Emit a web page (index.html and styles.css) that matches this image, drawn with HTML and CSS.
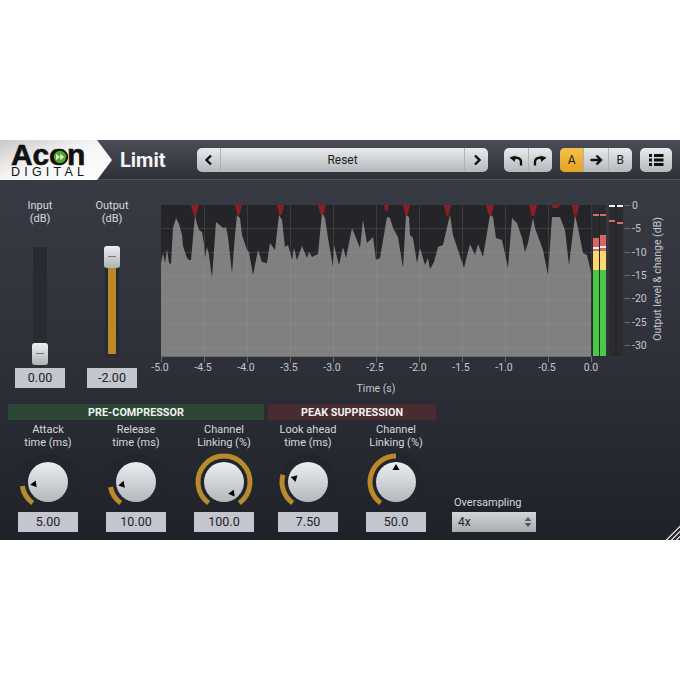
FILE: index.html
```html
<!DOCTYPE html>
<html lang="en">
<head>
    <meta charset="UTF-8">
    <title>Acon Digital Limit</title>
    <link rel="stylesheet" href="styles.css">
</head>
<body>
    <div class="plugin">
        <div class="header">
            <div class="logo">
                <div class="logo-name">Acon</div>
                <div class="logo-sub">DIGITAL</div>
                <svg class="logo-dot" viewBox="0 0 18 18" width="18" height="18">
                    <circle cx="9" cy="9" r="7.200" fill="#4ea52c" stroke="#111" stroke-width="2"/>
                    <path d="M5 5.800 9 9 5 12.200ZM9.200 5.800 13.200 9 9.200 12.200Z" fill="#dcebd0"/>
                </svg>
            </div>
            <div class="title">Limit</div>
            <div class="btn-group preset">
                <div class="btn btn-side"><svg class="icon" viewBox="0 0 16 16"><path class="line" d="M10 3.500 5.500 8l4.500 4.500"/></svg></div>
                <div class="btn preset-name">Reset</div>
                <div class="btn btn-side"><svg class="icon" viewBox="0 0 16 16"><path class="line" d="M6 3.500 10.500 8 6 12.500"/></svg></div>
            </div>
            <div class="btn-group history">
                <div class="btn"><svg class="icon" viewBox="0 0 16 16"><path class="line" d="M13 13.500V10C13 6 9 4.500 5 7"/><path d="M1.500 5.500 7.500 3.500 6.800 10Z"/></svg></div>
                <div class="btn"><svg class="icon" viewBox="0 0 16 16"><path class="line" d="M3 13.500V10C3 6 7 4.500 11 7"/><path d="M14.500 5.500 8.500 3.500 9.200 10Z"/></svg></div>
            </div>
            <div class="btn-group compare">
                <div class="btn btn-on">A</div>
                <div class="btn"><svg class="icon" viewBox="0 0 16 16"><path class="line" d="M2.500 8H13M8.500 3.500 13 8l-4.500 4.500"/></svg></div>
                <div class="btn">B</div>
            </div>
            <div class="btn-group menu">
                <div class="btn"><svg class="icon icon-wide" viewBox="0 0 16 14"><path d="M1 1h3v3H1zM6 1h9.500v3H6zM1 5.500h3v3H1zM6 5.500h9.500v3H6zM1 10h3v3H1zM6 10h9.500v3H6z"/></svg></div>
            </div>
        </div>

        <div class="main">
            <div class="fader-col">
                <div class="label">Input<br>(dB)</div>
                <div class="fader">
                    <div class="track"></div>
                    <div class="handle handle-low"></div>
                </div>
                <div class="value">0.00</div>
            </div>
            <div class="fader-col">
                <div class="label">Output<br>(dB)</div>
                <div class="fader">
                    <div class="track"><div class="track-fill"></div></div>
                    <div class="handle handle-high"></div>
                </div>
                <div class="value">-2.00</div>
            </div>

            <svg class="graph" viewBox="150 195 530 205" width="530" height="205">
                <rect class="plot-bg" x="161" y="205" width="430" height="151"/>
                <path class="wave" d="M161 356V263L163 253 165 263 167 249 169 263 171 264 173 228 176 218 179 224 182 235 183 246 187 258 189 260 191 260 195 215 197 224 199 230 202 232 204 244 205 258 207 247 209 255 212 278 216 222 222 227 224 228 226 227 228 237 232 273 235 235 237 215 240 218 242 235 247 250 249 252 253 275 258 250 262 262 267 263 270 243 275 250 279 215 282 220 285 247 288 245 292 260 294 248 297 260 302 246 307 258 309 252 312 257 318 254 322 213 325 218 328 238 333 267 334 245 339 265 343 247 346 258 352 228 360 248 363 220 367 243 373 237 376 260 380 258 387 217 390 218 393 228 398 237 403 268 406 215 409 217 410 235 413 238 417 263 420 248 425 265 428 258 430 269 434 262 438 247 443 245 448 223 450 215 453 235 458 250 464 268 470 244 475 255 478 244 483 257 490 215 493 217 496 238 502 240 508 268 512 218 517 223 522 238 525 252 528 243 533 218 535 228 543 250 548 275 552 217 560 217 565 230 569 265 575 215 578 228 583 253 587 255 591 272V356Z"/>
                <path class="peak" d="M191 205h8l-3 11h-2zM235 205h7l-2.500 10h-2zM277 205h7l-2.500 10h-2zM318 205h8l-2.500 9h-3zM384 205h5l-1.500 6h-2zM403 205h7l-2.500 10h-2zM444 205h7l-2.500 11h-2zM486 205h8l-2.500 10h-3zM529 205h8l-2.500 11h-3zM551 205h9l-2 3h-5zM572 205h7l-2 10h-3z"/>
                <path class="grid" d="M161 228H591M161 252H591M161 275H591M161 299H591M161 323H591M161 347H591M204 205V356M247 205V356M290 205V356M333 205V356M376 205V356M419 205V356M462 205V356M505 205V356M548 205V356"/>
                <path class="axis" d="M161 356H591M161 356V362M204 356V362M247 356V362M290 356V362M333 356V362M376 356V362M419 356V362M462 356V362M505 356V362M548 356V362M591 356V362"/>
                <g class="ticks-x">
                    <text x="160" y="371">-5.0</text>
                    <text x="203" y="371">-4.5</text>
                    <text x="246" y="371">-4.0</text>
                    <text x="289" y="371">-3.5</text>
                    <text x="332" y="371">-3.0</text>
                    <text x="375" y="371">-2.5</text>
                    <text x="418" y="371">-2.0</text>
                    <text x="461" y="371">-1.5</text>
                    <text x="504" y="371">-1.0</text>
                    <text x="547" y="371">-0.5</text>
                    <text x="591" y="371">0.0</text>
                    <text x="376" y="392">Time (s)</text>
                </g>

                <rect class="meter-bg" x="592" y="205" width="14" height="151"/>
                <rect class="meter-bg" x="609" y="205" width="14" height="151"/>
                <rect class="meter-green" x="593" y="270" width="13" height="86"/>
                <rect class="meter-yellow" x="593" y="251" width="13" height="19"/>
                <rect class="meter-red" x="593" y="238" width="6" height="13"/>
                <rect class="meter-red" x="600" y="235" width="6" height="16"/>
                <rect class="meter-white" x="593" y="247" width="6" height="2"/>
                <rect class="meter-white" x="600" y="246" width="6" height="2"/>
                <rect class="meter-pink" x="593" y="214" width="6" height="2"/>
                <rect class="meter-pink" x="600" y="214" width="6" height="2"/>
                <rect class="meter-gap" x="599" y="205" width="1" height="151"/>
                <rect class="meter-gap" x="615.500" y="205" width="1" height="151"/>
                <rect class="meter-white" x="609" y="205" width="6" height="2"/>
                <rect class="meter-white" x="617" y="205" width="6" height="2"/>
                <rect class="meter-pink" x="609" y="220" width="6" height="2"/>
                <rect class="meter-pink" x="617" y="222" width="6" height="2"/>

                <path class="axis" d="M624 205H630M624 228H630M624 252H630M624 275H630M624 298H630M624 322H630M624 345H630"/>
                <g class="ticks-y">
                    <text x="632" y="209">0</text>
                    <text x="632" y="232">-5</text>
                    <text x="632" y="256">-10</text>
                    <text x="632" y="279">-15</text>
                    <text x="632" y="302">-20</text>
                    <text x="632" y="326">-25</text>
                    <text x="632" y="349">-30</text>
                </g>
                <text class="side-label" transform="rotate(-90 661 279)" x="661" y="279">Output level &amp; change (dB)</text>
            </svg>
        </div>

        <div class="bottom">
            <div class="group">
                <div class="group-title title-green">PRE-COMPRESSOR</div>
                <div class="knobs">
                    <div class="knob-col">
                        <div class="label">Attack<br>time (ms)</div>
                        <svg class="knob" viewBox="2 2 60 60" width="60" height="60">
                            <defs>
                                <linearGradient id="knobFace" x1="0" y1="0" x2="0" y2="1">
                                    <stop offset="0" stop-color="#eceef1"/>
                                    <stop offset="1" stop-color="#b4b7bc"/>
                                </linearGradient>
                            </defs>
                            <circle class="knob-back" cx="32" cy="32" r="28.500"/>
                            <path class="knob-arc" d="M16.700 53A26 26 0 0 1 6.300 36.100"/>
                            <circle cx="32" cy="32" r="20" fill="url(#knobFace)"/>
                            <path d="M32 14l-3.500 6h7z" transform="rotate(-99 32 32)"/>
                        </svg>
                        <div class="value">5.00</div>
                    </div>
                    <div class="knob-col">
                        <div class="label">Release<br>time (ms)</div>
                        <svg class="knob" viewBox="2 2 60 60" width="60" height="60">
                            <circle class="knob-back" cx="32" cy="32" r="28.500"/>
                            <path class="knob-arc" d="M16.700 53A26 26 0 0 1 6.500 37"/>
                            <circle cx="32" cy="32" r="20" fill="url(#knobFace)"/>
                            <path d="M32 14l-3.500 6h7z" transform="rotate(-101 32 32)"/>
                        </svg>
                        <div class="value">10.00</div>
                    </div>
                    <div class="knob-col">
                        <div class="label">Channel<br>Linking (%)</div>
                        <svg class="knob" viewBox="2 2 60 60" width="60" height="60">
                            <circle class="knob-back" cx="32" cy="32" r="28.500"/>
                            <path class="knob-arc" d="M16.700 53A26 26 0 1 1 47.300 53"/>
                            <circle cx="32" cy="32" r="20" fill="url(#knobFace)"/>
                            <path d="M32 14l-3.500 6h7z" transform="rotate(144 32 32)"/>
                        </svg>
                        <div class="value">100.0</div>
                    </div>
                </div>
            </div>
            <div class="group">
                <div class="group-title title-red">PEAK SUPPRESSION</div>
                <div class="knobs">
                    <div class="knob-col">
                        <div class="label">Look ahead<br>time (ms)</div>
                        <svg class="knob" viewBox="2 2 60 60" width="60" height="60">
                            <circle class="knob-back" cx="32" cy="32" r="28.500"/>
                            <path class="knob-arc" d="M16.700 53A26 26 0 0 1 7 24.800"/>
                            <circle cx="32" cy="32" r="20" fill="url(#knobFace)"/>
                            <path d="M32 14l-3.500 6h7z" transform="rotate(-74 32 32)"/>
                        </svg>
                        <div class="value">7.50</div>
                    </div>
                    <div class="knob-col">
                        <div class="label">Channel<br>Linking (%)</div>
                        <svg class="knob" viewBox="2 2 60 60" width="60" height="60">
                            <circle class="knob-back" cx="32" cy="32" r="28.500"/>
                            <path class="knob-arc" d="M16.700 53A26 26 0 0 1 32 6"/>
                            <circle cx="32" cy="32" r="20" fill="url(#knobFace)"/>
                            <path d="M32 14l-3.500 6h7z"/>
                        </svg>
                        <div class="value">50.0</div>
                    </div>
                </div>
            </div>
            <div class="oversampling">
                <div class="over-label">Oversampling</div>
                <div class="select">
                    <span>4x</span>
                    <svg class="select-arrows" viewBox="0 0 8 12" width="8" height="12"><path d="M4 1 7.500 5H.5ZM4 11 .5 7h7Z"/></svg>
                </div>
            </div>
        </div>
        <div class="grip"></div>
    </div>
</body>
</html>
```

FILE: styles.css
```css
body { margin: 0; background: #fff; font-family: Roboto, "Liberation Sans", sans-serif; }
.plugin { position: relative; width: 680px; height: 400px; margin-top: 140px; overflow: hidden; background: linear-gradient(180deg, #3a3d46 0%, #30323b 50%, #1e2128 100%); color: #d6d8dc; }

.header { display: flex; align-items: center; height: 39px; border-bottom: 1px solid #4f5159; background: linear-gradient(180deg, #4b4d56 0%, #2f3139 100%); }
.logo { position: relative; flex: none; width: 112px; height: 40px; margin-bottom: -1px; color: #111; }
.logo::before { content: ""; position: absolute; inset: 0; background: linear-gradient(160deg, #c9c9c9 0%, #f4f4f4 45%, #ffffff 100%); clip-path: polygon(0 0, 97px 0, 112px 20px, 97px 40px, 0 40px); }
.logo-name { position: absolute; left: 11px; top: 3px; font: bold 30px/24px "Liberation Sans", sans-serif; letter-spacing: -0.2px; -webkit-text-stroke: 0.6px #111; }
.logo-sub { position: absolute; left: 11px; top: 27px; font: 12.500px/10px "Liberation Sans", sans-serif; letter-spacing: 4.200px; white-space: nowrap; }
.logo-dot { position: absolute; left: 51px; top: 8px; }
.title { flex: none; width: 85px; padding-left: 8px; box-sizing: border-box; font-size: 20px; font-weight: 700; color: #f4f5f6; }

.btn-group { flex: none; display: flex; height: 24px; border-radius: 5px; overflow: hidden; background: linear-gradient(180deg, #e9eaec 0%, #b5b8bd 100%); color: #1c1c1e; font-size: 12px; }
.btn { flex: 1; display: flex; align-items: center; justify-content: center; border-left: 1px solid #aeb1b6; }
.btn:first-child { border-left: 0; }
.btn-on { background: linear-gradient(180deg, #f6c04a 0%, #e3a322 100%); }
.icon { width: 16px; height: 16px; fill: #111; }
.icon-wide { height: 14px; }
.line { fill: none; stroke: #111; stroke-width: 2.400; }
.preset { width: 291px; }
.btn-side { flex: none; width: 23px; }
.preset-name { flex: 1; }
.history { width: 48px; margin-left: 16px; }
.compare { width: 72px; margin-left: 8px; }
.menu { width: 32px; margin-left: 8px; }

.main { display: flex; height: 224px; padding-left: 15px; }
.fader-col { flex: none; width: 50px; margin-right: 22px; padding-top: 19px; }
.fader-col + .fader-col { margin-right: 13px; }
.label { font-size: 11px; line-height: 13px; text-align: center; white-space: nowrap; }
.fader { position: relative; height: 122px; margin-top: 21px; }
.track { position: absolute; left: 18px; top: 1px; bottom: 11px; width: 14px; background: #282a30; }
.track-fill { position: absolute; left: 3px; right: 3px; top: 20px; bottom: 3px; background: #b98a26; }
.handle { position: absolute; left: 17px; width: 16px; height: 22px; border-radius: 3px; background: linear-gradient(180deg, #eeeff1 0%, #aeb1b6 100%); }
.handle::after { content: ""; position: absolute; left: 4px; right: 4px; top: 10px; height: 1px; background: #777a80; }
.handle-low { top: 97px; }
.handle-high { top: 0; }
.value { height: 20px; background: #c3c6ce; color: #222; font-size: 12.500px; line-height: 20px; text-align: center; }

.graph { flex: none; margin-top: 15px; }
.plot-bg { fill: #252529; }
.wave { fill: #808080; }
.peak { fill: #8c1d22; }
.grid { fill: none; stroke: #a0a0a0; stroke-opacity: 0.2; transform: translate(0.5px, 0.5px); }
.axis { fill: none; stroke: #6a6c72; transform: translate(0.5px, 0.5px); }
.graph text { fill: #c4c6ca; font-size: 10.500px; }
.ticks-x text { text-anchor: middle; }
.side-label { text-anchor: middle; }
.meter-bg { fill: #2b2b2d; }
.meter-green { fill: #48c948; }
.meter-yellow { fill: #fbd970; }
.meter-red { fill: #d96565; }
.meter-white { fill: #f4f4f4; }
.meter-pink { fill: #d96a6a; }
.meter-gap { fill: #222; }

.bottom { display: flex; gap: 4px; padding-left: 8px; }
.group { width: 256px; }
.group + .group { width: 168px; }
.group-title { height: 16px; font-size: 10.800px; line-height: 17px; font-weight: 700; text-align: center; color: #f0f1f2; }
.title-green { background: #2b4633; }
.title-red { background: #4a2c30; }
.knobs { display: flex; gap: 28px; padding-left: 10px; }
.knob-col { width: 60px; padding-top: 3px; }
.knob { display: block; margin-top: 3px; }
.knob-back { fill: #22252e; }
.knob-arc { fill: none; stroke: #b98a2a; stroke-width: 5; }

.oversampling { width: 84px; margin-left: 12px; padding-top: 92px; }
.over-label { font-size: 11px; line-height: 14px; margin: 0 0 2px 2px; white-space: nowrap; }
.select { display: flex; align-items: center; justify-content: space-between; height: 20px; padding: 0 4px 0 6px; background: linear-gradient(180deg, #d3d5d9 0%, #a9acb1 100%); color: #222; font-size: 12px; }
.select-arrows { fill: #55585e; }

.grip { position: absolute; right: 0; bottom: 0; width: 17px; height: 17px; background: repeating-linear-gradient(135deg, #c8c8c8 0 1.500px, #2a2c33 1.500px 3.500px); clip-path: polygon(100% 0, 100% 100%, 0 100%); }
```
